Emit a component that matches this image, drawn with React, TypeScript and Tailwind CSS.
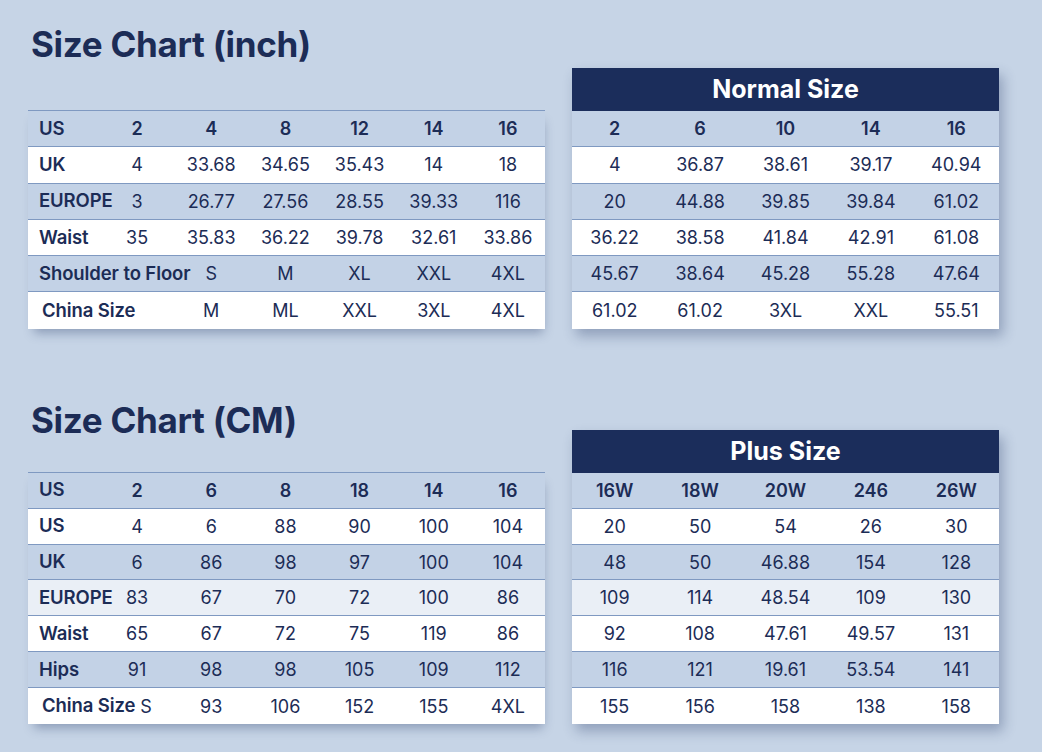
const font = { fontFamily: "Inter, 'Noto Sans', sans-serif" };

type Tone = "blue" | "white" | "light";

const toneClass: Record<Tone, string> = {
  blue: "bg-[#c3d2e6]",
  white: "bg-white",
  light: "bg-[#eaeff6]",
};

interface Row {
  cells: string[];
  tone: Tone;
  head?: boolean;
}

const inchRows: Row[] = [
  { cells: ["US", "2", "4", "8", "12", "14", "16"], tone: "blue", head: true },
  { cells: ["UK", "4", "33.68", "34.65", "35.43", "14", "18"], tone: "white" },
  { cells: ["EUROPE", "3", "26.77", "27.56", "28.55", "39.33", "116"], tone: "blue" },
  { cells: ["Waist", "35", "35.83", "36.22", "39.78", "32.61", "33.86"], tone: "white" },
  { cells: ["Shoulder to Floor", "", "S", "M", "XL", "XXL", "4XL"], tone: "blue" },
  { cells: ["China Size", "", "M", "ML", "XXL", "3XL", "4XL"], tone: "white" },
];

const normalRows: Row[] = [
  { cells: ["2", "6", "10", "14", "16"], tone: "blue", head: true },
  { cells: ["4", "36.87", "38.61", "39.17", "40.94"], tone: "white" },
  { cells: ["20", "44.88", "39.85", "39.84", "61.02"], tone: "blue" },
  { cells: ["36.22", "38.58", "41.84", "42.91", "61.08"], tone: "white" },
  { cells: ["45.67", "38.64", "45.28", "55.28", "47.64"], tone: "blue" },
  { cells: ["61.02", "61.02", "3XL", "XXL", "55.51"], tone: "white" },
];

const cmRows: Row[] = [
  { cells: ["US", "2", "6", "8", "18", "14", "16"], tone: "blue", head: true },
  { cells: ["US", "4", "6", "88", "90", "100", "104"], tone: "white" },
  { cells: ["UK", "6", "86", "98", "97", "100", "104"], tone: "blue" },
  { cells: ["EUROPE", "83", "67", "70", "72", "100", "86"], tone: "light" },
  { cells: ["Waist", "65", "67", "72", "75", "119", "86"], tone: "white" },
  { cells: ["Hips", "91", "98", "98", "105", "109", "112"], tone: "blue" },
  { cells: ["China Size", "S", "93", "106", "152", "155", "4XL"], tone: "white" },
];

const plusRows: Row[] = [
  { cells: ["16W", "18W", "20W", "246", "26W"], tone: "blue", head: true },
  { cells: ["20", "50", "54", "26", "30"], tone: "white" },
  { cells: ["48", "50", "46.88", "154", "128"], tone: "blue" },
  { cells: ["109", "114", "48.54", "109", "130"], tone: "light" },
  { cells: ["92", "108", "47.61", "49.57", "131"], tone: "white" },
  { cells: ["116", "121", "19.61", "53.54", "141"], tone: "blue" },
  { cells: ["155", "156", "158", "138", "158"], tone: "white" },
];

function LabelTable({ rows, rowH }: { rows: Row[]; rowH: string }) {
  return (
    <div className="w-[517px] border-t-[1.5px] border-[#7f99c1] shadow-[2px_8px_10px_-4px_rgba(30,50,95,0.35)]">
      {rows.map((r, i) => {
        const china = r.cells[0] === "China Size";
        return (
          <div
            key={i}
            className={`grid grid-cols-[72px_repeat(6,1fr)] items-center ${rowH} ${toneClass[r.tone]} ${
              i < rows.length - 1 ? "border-b-[1.5px] border-[#7f99c1]" : ""
            }`}
          >
            {r.cells.map((c, j) =>
              j === 0 ? (
                <div
                  key={j}
                  className={`whitespace-nowrap font-semibold text-[18.5px] tracking-[-0.1px] text-[#1c2c56] ${
                    china ? "pl-[14px]" : "pl-[11px]"
                  }`}
                >
                  {c}
                </div>
              ) : (
                <div
                  key={j}
                  className={`text-center text-[18px] text-[#1c2c56] ${r.head ? "font-semibold" : "font-normal"} ${
                    china && j === 1 ? "pl-[18px]" : ""
                  }`}
                >
                  {c}
                </div>
              )
            )}
          </div>
        );
      })}
    </div>
  );
}

function BoxTable({ title, rows, rowH }: { title: string; rows: Row[]; rowH: string }) {
  return (
    <div className="w-[427px] shadow-[4px_7px_12px_rgba(30,50,95,0.32)]">
      <div className="flex h-[43px] items-center justify-center bg-[#1b2d5b] text-[25px] font-bold text-white">
        {title}
      </div>
      {rows.map((r, i) => (
        <div
          key={i}
          className={`grid grid-cols-5 items-center ${rowH} ${toneClass[r.tone]} ${
            i < rows.length - 1 ? "border-b-[1.5px] border-[#7f99c1]" : ""
          }`}
        >
          {r.cells.map((c, j) => (
            <div
              key={j}
              className={`text-center text-[18px] text-[#1c2c56] ${r.head ? "font-semibold" : "font-normal"}`}
            >
              {c}
            </div>
          ))}
        </div>
      ))}
    </div>
  );
}

export default function App() {
  return (
    <div
      className="w-[1042px] h-[752px] overflow-hidden bg-[#c6d4e6] pl-[28px] pt-[27px]"
      style={font}
    >
      {/* Inch section */}
      <div className="flex items-end gap-[27px]">
        <div>
          <h1 className="mb-[48px] h-[35px] pl-[3px] text-[35px] font-bold leading-[35px] tracking-[-0.3px] text-[#1c2c56]">
            Size Chart (inch)
          </h1>
          <LabelTable rows={inchRows} rowH="h-[36.3px]" />
        </div>
        <BoxTable title="Normal Size" rows={normalRows} rowH="h-[36.3px]" />
      </div>

      {/* CM section */}
      <div className="mt-[74px] flex items-end gap-[27px]">
        <div>
          <h1 className="mb-[34px] h-[35px] pl-[3px] text-[35px] font-bold leading-[35px] tracking-[-0.3px] text-[#1c2c56]">
            Size Chart (CM)
          </h1>
          <LabelTable rows={cmRows} rowH="h-[35.9px]" />
        </div>
        <BoxTable title="Plus Size" rows={plusRows} rowH="h-[35.9px]" />
      </div>
    </div>
  );
}
